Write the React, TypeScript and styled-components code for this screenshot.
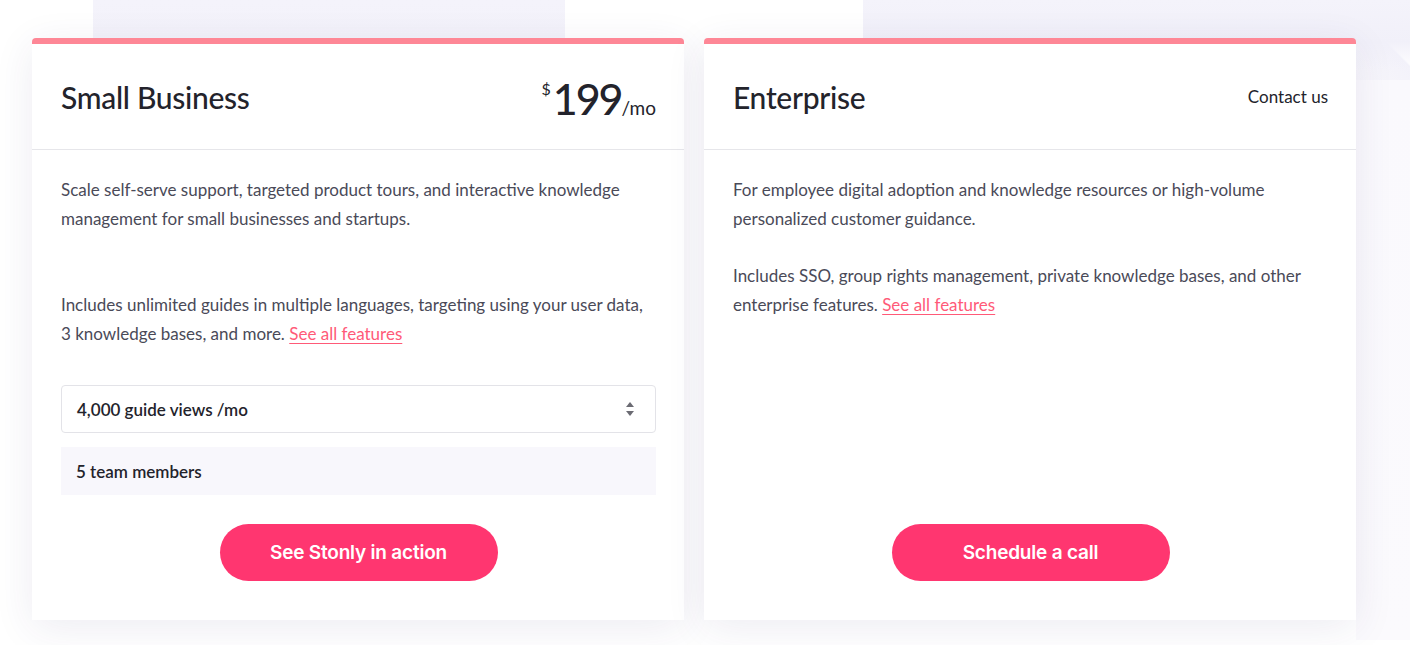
import React, {FC} from 'react';
import styled, {createGlobalStyle} from 'styled-components';

const GlobalStyle = createGlobalStyle`
  html, body {
    margin: 0;
    padding: 0;
    background: #fff;
  }
  body {
    font-family: Lato, "Noto Sans", sans-serif;
    -webkit-font-smoothing: antialiased;
  }
`

const Page = styled.div`
  width: 1410px;
  height: 645px;
  box-sizing: border-box;
  padding: 38px 54px 0 32px;
  display: grid;
  grid-template-columns: 652px 652px;
  column-gap: 20px;
  align-items: start;
  background:
    linear-gradient(180deg, #f4f3fb 0%, #f3f2fa 60%, rgba(243, 242, 250, 0) 100%) 93px 0 / 472px 60px no-repeat,
    linear-gradient(180deg, #f4f3fb 0%, #f1f0f9 60%, rgba(243, 242, 250, 0) 100%) 863px 0 / 547px 70px no-repeat,
    linear-gradient(225deg, #ffffff 0%, #ffffff 48%, #f3f2fa 50%, #f7f6fb 100%) 1356px 0 / 54px 80px no-repeat,
    linear-gradient(180deg, #faf9fd 0%, #fbfafd 100%) 1356px 80px / 54px 560px no-repeat,
    #ffffff;
`

const Card = styled.div`
  height: 582px;
  display: flex;
  flex-direction: column;
  background: #fff;
  border-top: 6px solid #fe8796;
  border-radius: 4px 4px 0 0;
  box-shadow: 0 8px 40px rgba(50, 40, 110, 0.09);
  box-sizing: border-box;
`

const Header = styled.div`
  height: 105px;
  padding: 0 28px 0 29px;
  display: flex;
  align-items: center;
  justify-content: space-between;
  border-bottom: 1px solid #e6e6ea;
`

const Title = styled.h2`
  margin: 0;
  font-size: 30px;
  font-weight: 500;
  color: #23232b;
  letter-spacing: -0.3px;
`

const Price = styled.div`
  display: flex;
  align-items: baseline;
  color: #23232b;
  margin-top: 4px;
`

const Currency = styled.span`
  font-size: 16px;
  align-self: flex-start;
  margin-top: 2px;
  margin-right: 2px;
`

const Amount = styled.span`
  font-size: 43px;
  font-weight: 500;
  line-height: 1;
  letter-spacing: -2px;
`

const Period = styled.span`
  font-size: 19px;
`

const Contact = styled.a`
  font-size: 17px;
  color: #23232b;
  text-decoration: none;
`

const Body = styled.div`
  flex: 1;
  display: flex;
  flex-direction: column;
  padding: 25px 28px 39px 29px;
`

const Text = styled.p<{$lines?: number}>`
  margin: 0 0 28px;
  font-size: 17px;
  line-height: 29px;
  color: #4a4a58;
  min-height: ${p => (p.$lines ?? 0) * 29}px;
`

const Link = styled.a`
  color: #ff5a78;
  text-decoration: underline;
  text-underline-offset: 3px;
`

const Select = styled.div`
  margin-top: 9px;
  height: 48px;
  box-sizing: border-box;
  border: 1px solid #e3e3e8;
  border-radius: 4px;
  padding: 0 20px 0 15px;
  display: flex;
  align-items: center;
  justify-content: space-between;
  font-size: 17px;
  font-weight: 600;
  color: #23232b;
`

const Members = styled.div`
  margin-top: 14px;
  height: 48px;
  box-sizing: border-box;
  background: #f8f7fc;
  padding: 0 15px;
  display: flex;
  align-items: center;
  font-size: 17px;
  font-weight: 600;
  color: #23232b;
`

const Action = styled.button`
  margin: auto auto 0;
  width: 278px;
  height: 57px;
  border: 0;
  border-radius: 29px;
  background: #ff3670;
  color: #fff;
  font-family: Inter, Lato, sans-serif;
  font-size: 19px;
  font-weight: 600;
  letter-spacing: -0.2px;
  cursor: pointer;
`

const Arrows: FC = () => (
    <svg width="10" height="16" viewBox="0 0 10 16">
        <path d="M5 1 L9 6 L1 6 Z" fill="#6b6b73"/>
        <path d="M1 10 L9 10 L5 15 Z" fill="#6b6b73"/>
    </svg>
)

const App: FC = () => {
    return (
        <>
            <GlobalStyle/>
            <Page>
                <Card>
                    <Header>
                        <Title>Small Business</Title>
                        <Price>
                            <Currency>$</Currency>
                            <Amount>199</Amount>
                            <Period>/mo</Period>
                        </Price>
                    </Header>
                    <Body>
                        <Text $lines={3}>
                            Scale self-serve support, targeted product tours, and interactive knowledge
                            management for small businesses and startups.
                        </Text>
                        <Text>
                            Includes unlimited guides in multiple languages, targeting using your user data,
                            3 knowledge bases, and more. <Link href="#">See all features</Link>
                        </Text>
                        <Select>
                            <span>4,000 guide views /mo</span>
                            <Arrows/>
                        </Select>
                        <Members>5 team members</Members>
                        <Action>See Stonly in action</Action>
                    </Body>
                </Card>
                <Card>
                    <Header>
                        <Title>Enterprise</Title>
                        <Contact href="#">Contact us</Contact>
                    </Header>
                    <Body>
                        <Text>
                            For employee digital adoption and knowledge resources or high-volume
                            personalized customer guidance.
                        </Text>
                        <Text>
                            Includes SSO, group rights management, private knowledge bases, and other
                            enterprise features. <Link href="#">See all features</Link>
                        </Text>
                        <Action>Schedule a call</Action>
                    </Body>
                </Card>
            </Page>
        </>
    );
};

export default App;
